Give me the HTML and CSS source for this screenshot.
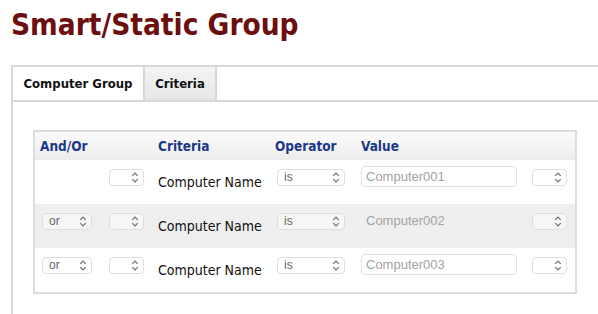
FILE: index.html
```html
<!DOCTYPE html>
<html>
<head>
<meta charset="utf-8">
<link rel="stylesheet" href="styles.css">
</head>
<body>
<h1 class="title">Smart/Static Group</h1>
<div class="panel">
  <div class="tabbar">
    <div class="tab tab-active">Computer Group</div>
    <div class="tab tab-gray">Criteria</div>
  </div>
  <div class="panel-body">
    <div class="crit">
      <div class="row head">
        <div class="c12">And/Or</div>
        <div class="c3">Criteria</div>
        <div class="c4">Operator</div>
        <div class="c5">Value</div>
      </div>

      <div class="row">
        <div class="c1"></div>
        <div class="c2"><div class="sel sel-s"><span></span><svg class="chev" viewBox="0 0 7 12"><path d="M1 4.5 L3.5 2 L6 4.5 M1 7.5 L3.5 10 L6 7.5"/></svg></div></div>
        <div class="c3 name">Computer Name</div>
        <div class="c4"><div class="sel sel-op"><span>is</span><svg class="chev" viewBox="0 0 7 12"><path d="M1 4.5 L3.5 2 L6 4.5 M1 7.5 L3.5 10 L6 7.5"/></svg></div></div>
        <div class="c5"><input class="val" type="text" value="Computer001"></div>
        <div class="c6"><div class="sel sel-s"><span></span><svg class="chev" viewBox="0 0 7 12"><path d="M1 4.5 L3.5 2 L6 4.5 M1 7.5 L3.5 10 L6 7.5"/></svg></div></div>
      </div>

      <div class="row row-alt">
        <div class="c1"><div class="sel sel-or"><span>or</span><svg class="chev" viewBox="0 0 7 12"><path d="M1 4.5 L3.5 2 L6 4.5 M1 7.5 L3.5 10 L6 7.5"/></svg></div></div>
        <div class="c2"><div class="sel sel-s"><span></span><svg class="chev" viewBox="0 0 7 12"><path d="M1 4.5 L3.5 2 L6 4.5 M1 7.5 L3.5 10 L6 7.5"/></svg></div></div>
        <div class="c3 name">Computer Name</div>
        <div class="c4"><div class="sel sel-op"><span>is</span><svg class="chev" viewBox="0 0 7 12"><path d="M1 4.5 L3.5 2 L6 4.5 M1 7.5 L3.5 10 L6 7.5"/></svg></div></div>
        <div class="c5"><input class="val val-dis" type="text" value="Computer002" disabled></div>
        <div class="c6"><div class="sel sel-s"><span></span><svg class="chev" viewBox="0 0 7 12"><path d="M1 4.5 L3.5 2 L6 4.5 M1 7.5 L3.5 10 L6 7.5"/></svg></div></div>
      </div>

      <div class="row">
        <div class="c1"><div class="sel sel-or"><span>or</span><svg class="chev" viewBox="0 0 7 12"><path d="M1 4.5 L3.5 2 L6 4.5 M1 7.5 L3.5 10 L6 7.5"/></svg></div></div>
        <div class="c2"><div class="sel sel-s"><span></span><svg class="chev" viewBox="0 0 7 12"><path d="M1 4.5 L3.5 2 L6 4.5 M1 7.5 L3.5 10 L6 7.5"/></svg></div></div>
        <div class="c3 name">Computer Name</div>
        <div class="c4"><div class="sel sel-op"><span>is</span><svg class="chev" viewBox="0 0 7 12"><path d="M1 4.5 L3.5 2 L6 4.5 M1 7.5 L3.5 10 L6 7.5"/></svg></div></div>
        <div class="c5"><input class="val" type="text" value="Computer003"></div>
        <div class="c6"><div class="sel sel-s"><span></span><svg class="chev" viewBox="0 0 7 12"><path d="M1 4.5 L3.5 2 L6 4.5 M1 7.5 L3.5 10 L6 7.5"/></svg></div></div>
      </div>
    </div>
  </div>
</div>
</body>
</html>
```
FILE: styles.css
```css
html, body {
  margin: 0;
  padding: 0;
  overflow: hidden;
  background: #ffffff;
}
body {
  font-family: "DejaVu Sans Condensed", "DejaVu Sans", sans-serif;
  color: #111;
}
.title {
  margin: 0;
  padding: 8px 0 0 11px;
  font-size: 29.5px;
  line-height: 34px;
  font-weight: bold;
  color: #6b0f0f;
  white-space: nowrap;
}
.panel {
  margin: 23px 0 0 11px;
  width: 587px;
  box-sizing: border-box;
  border-top: 2px solid #d8d8d8;
  border-left: 2px solid #d8d8d8;
}
.tabbar {
  display: flex;
  height: 33px;
  border-bottom: 2px solid #d8d8d8;
}
.tab {
  font-weight: bold;
  font-size: 13px;
  line-height: 33px;
  text-align: center;
  border-right: 2px solid #d8d8d8;
  color: #111;
}
.tab-active {
  width: 130px;
  background: #fff;
}
.tab-gray {
  width: 70px;
  background: linear-gradient(#f4f4f4, #e6e6e6);
}
.panel-body {
  box-sizing: border-box;
  padding: 28px 0 0 20px;
  height: 212px;
}
.crit {
  width: 540px;
  border: 2px solid #dcdcdc;
}
.row {
  display: flex;
  align-items: flex-start;
  height: 44px;
}
.row-alt {
  background: #efefef;
}
.head {
  height: 28px;
  background: linear-gradient(#fbfbfb, #ececec);
  color: #1b3886;
  font-weight: bold;
  font-size: 13.5px;
  line-height: 28px;
}
.c1 { width: 72px; flex: none; }
.c2 { width: 51px; flex: none; }
.c12 { width: 118px; flex: none; padding-left: 5px; }
.c3 { width: 117px; flex: none; }
.c4 { width: 86px; flex: none; }
.c5 { width: 170px; flex: none; }
.c6 { width: 44px; flex: none; }
.name {
  margin-top: 14px;
  font-size: 14px;
  line-height: 16px;
  color: #111;
  white-space: nowrap;
}
.sel {
  position: relative;
  height: 15px;
  margin-top: 9px;
  border: 1px solid #dedede;
  border-radius: 4px;
  background: #fff;
  font-family: "Liberation Sans", Arial, sans-serif;
  font-size: 12px;
  line-height: 15px;
  color: #666;
  box-sizing: content-box;
}
.row-alt .sel {
  background: #f6f6f6;
}
.sel span {
  padding-left: 6px;
}
.sel-or { width: 48px; margin-left: 7px; }
.sel-s { width: 33px; margin-left: 2px; }
.c6 .sel-s { margin-left: 1px; }
.sel-op { width: 66px; margin-left: 2px; }
.chev {
  position: absolute;
  right: 4px;
  top: 1px;
  width: 8px;
  height: 13px;
  fill: none;
  stroke: #6e6e6e;
  stroke-width: 1.1;
}
.val {
  display: block;
  box-sizing: border-box;
  width: 156px;
  height: 21px;
  margin: 6px 0 0 0;
  padding: 0 0 0 4px;
  border: 1px solid #e2e2e2;
  border-radius: 4px;
  background: #fff;
  font-family: "Liberation Sans", Arial, sans-serif;
  font-size: 13px;
  color: #a3a3a3;
  outline: none;
}
.val-dis {
  border-color: transparent;
  background: transparent;
  color: #a3a3a3;
}
```
